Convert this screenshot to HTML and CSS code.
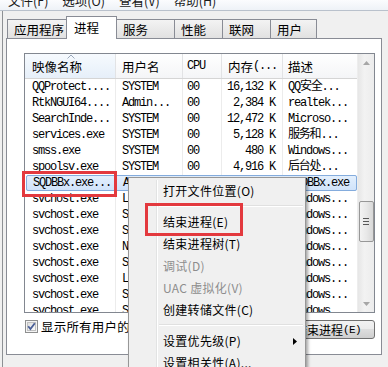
FILE: index.html
```html
<!DOCTYPE html>
<html lang="zh-CN">
<head>
<meta charset="utf-8">
<link rel="stylesheet" href="styles.css">
</head>
<body>
<div class="menubar">
  <span class="mi">文件(F)</span>
  <span class="mi">选项(O)</span>
  <span class="mi">查看(V)</span>
  <span class="mi">帮助(H)</span>
</div>
<div class="app">
  <div class="tabs">
    <div class="tab w60">应用程序</div>
    <div class="tab sel w50">进程</div>
    <div class="tab w58">服务</div>
    <div class="tab w48">性能</div>
    <div class="tab w48">联网</div>
    <div class="tab w47">用户</div>
  </div>
  <div class="panel">
    <div class="list">
      <div class="grid">
        <div class="hdr">
          <div class="hc sorted"><span class="cjk">映像名称</span>
            <svg class="sortarrow" width="8" height="5" viewBox="0 0 8 5"><polyline points="0.5,4.5 4,1 7.5,4.5" fill="none" stroke="#9aa8bb" stroke-width="1"/></svg>
          </div>
          <div class="hc"><span class="cjk">用户名</span></div>
          <div class="hc">CPU</div>
          <div class="hc"><span class="cjk">内存</span>(...</div>
          <div class="hc"><span class="cjk">描述</span></div>
        </div>
        <div class="rows">
          <div class="row"><div class="c">QQProtect....</div><div class="c">SYSTEM</div><div class="c">00</div><div class="c r">16,132 K</div><div class="c">QQ安全...</div></div>
          <div class="row"><div class="c">RtkNGUI64....</div><div class="c">Admin...</div><div class="c">00</div><div class="c r">2,384 K</div><div class="c">realtek...</div></div>
          <div class="row"><div class="c">SearchInde...</div><div class="c">SYSTEM</div><div class="c">00</div><div class="c r">12,472 K</div><div class="c">Microso...</div></div>
          <div class="row"><div class="c">services.exe</div><div class="c">SYSTEM</div><div class="c">00</div><div class="c r">5,128 K</div><div class="c">服务和...</div></div>
          <div class="row"><div class="c">smss.exe</div><div class="c">SYSTEM</div><div class="c">00</div><div class="c r">480 K</div><div class="c">Windows...</div></div>
          <div class="row"><div class="c">spoolsv.exe</div><div class="c">SYSTEM</div><div class="c">00</div><div class="c r">4,916 K</div><div class="c">后台处...</div></div>
          <div class="row selrow"><div class="c">SQDBBx.exe...</div><div class="c">Admin...</div><div class="c">00</div><div class="c r">3,056 K</div><div class="c">SQDBBx.exe</div></div>
          <div class="row"><div class="c">svchost.exe</div><div class="c">LOCAL...</div><div class="c">00</div><div class="c r">9,812 K</div><div class="c">Windows...</div></div>
          <div class="row"><div class="c">svchost.exe</div><div class="c">SYSTEM</div><div class="c">00</div><div class="c r">4,204 K</div><div class="c">Windows...</div></div>
          <div class="row"><div class="c">svchost.exe</div><div class="c">SYSTEM</div><div class="c">00</div><div class="c r">22,516 K</div><div class="c">Windows...</div></div>
          <div class="row"><div class="c">svchost.exe</div><div class="c">NETWO...</div><div class="c">00</div><div class="c r">6,332 K</div><div class="c">Windows...</div></div>
          <div class="row"><div class="c">svchost.exe</div><div class="c">SYSTEM</div><div class="c">00</div><div class="c r">17,940 K</div><div class="c">Windows...</div></div>
          <div class="row"><div class="c">svchost.exe</div><div class="c">LOCAL...</div><div class="c">00</div><div class="c r">8,120 K</div><div class="c">Windows...</div></div>
          <div class="row"><div class="c">svchost.exe</div><div class="c">SYSTEM</div><div class="c">00</div><div class="c r">2,764 K</div><div class="c">Windows...</div></div>
          <div class="row"><div class="c">svchost.exe</div><div class="c">SYSTEM</div><div class="c">00</div><div class="c r">1,908 K</div><div class="c">Windows...</div></div>
        </div>
      </div>
      <div class="vscroll">
        <div class="arrow"><svg width="7" height="4" viewBox="0 0 7 4"><polygon points="0,4 3.5,0 7,4" fill="#a6a6a6"/></svg></div>
        <div class="track">
          <div class="thumb"><span class="grip"></span><span class="grip"></span><span class="grip"></span></div>
        </div>
        <div class="arrow"><svg width="7" height="4" viewBox="0 0 7 4"><polygon points="0,0 3.5,4 7,0" fill="#a6a6a6"/></svg></div>
      </div>
    </div>
    <div class="opts">
      <label class="chk">
        <svg class="box" width="13" height="13" viewBox="0 0 13 13">
          <defs><linearGradient id="cg" x1="0" y1="0" x2="1" y2="1"><stop offset="0" stop-color="#dcdcdc"/><stop offset="1" stop-color="#ffffff"/></linearGradient></defs>
          <rect x="0.5" y="0.5" width="12" height="12" fill="#f4f4f4" stroke="#8e8f8f"/>
          <rect x="2.5" y="2.5" width="8" height="8" fill="url(#cg)" stroke="#c0c0c0"/>
          <polyline points="3.2,6.2 5.4,9 9.8,3.2" fill="none" stroke="#4a5f97" stroke-width="1.8"/>
        </svg>
        <span>显示所有用户的进程</span>
      </label>
      <div class="btn">结束进程<span class="mono">(E)</span></div>
    </div>
  </div>
</div>

<div class="ctx">
  <div class="gutter"></div>
  <div class="item">打开文件位置(O)</div>
  <div class="sep"></div>
  <div class="item">结束进程(E)</div>
  <div class="item">结束进程树(T)</div>
  <div class="item dis">调试(D)</div>
  <div class="item dis">UAC 虚拟化(V)</div>
  <div class="item">创建转储文件(C)</div>
  <div class="sep"></div>
  <div class="item sub">设置优先级(P)<svg class="subarrow" width="4" height="7" viewBox="0 0 4 7"><polygon points="0,0 4,3.5 0,7" fill="#000"/></svg></div>
  <div class="item">设置相关性(A)...</div>
</div>

<div class="mark mark1"></div>
<div class="mark mark2"></div>
</body>
</html>
```

FILE: styles.css
```css
* { box-sizing: border-box; }

body {
  margin: 0;
  width: 388px;
  height: 367px;
  overflow: hidden;
  position: relative;
  background: #f0f0f0;
  font-family: "Noto Sans CJK SC", sans-serif;
  font-size: 12px;
  color: #000;
}

.menubar {
  height: 11px;
  background: linear-gradient(#fbfcfe, #eef2f7);
  border-bottom: 1px solid #b9c1cc;
  display: flex;
  align-items: flex-start;
  padding-left: 8px;
  line-height: 2px;
  font-size: 12.5px;
  color: #1a1a1a;
}
.mi { margin-right: 14px; }

.app {
  margin-left: 2px;
  border-left: 1px solid #8d9094;
  padding-left: 3px;
  height: 356px;
}

.tabs {
  display: flex;
  align-items: flex-end;
  height: 27px;
  margin-left: 1px;
}
.tab {
  height: 19px;
  border: 1px solid #898c95;
  border-bottom: none;
  background: linear-gradient(#f3f3f3, #e1e1e1);
  padding-left: 6px;
  line-height: 19px;
  font-size: 12.5px;
  margin-right: -1px;
}
.tab.sel {
  height: 23px;
  background: #fff;
  margin-bottom: -1px;
  position: relative;
  z-index: 1;
  line-height: 22px;
  padding-left: 7px;
}
.w60 { width: 60px; }
.w50 { width: 51px; }
.w58 { width: 59px; }
.w48 { width: 49px; }
.w47 { width: 47px; }

.panel {
  width: 376px;
  height: 317px;
  border: 1px solid #898c95;
  background: #fff;
  padding: 14px 0 0 17px;
}

.list {
  width: 351px;
  height: 260px;
  border: 1px solid #828790;
  display: flex;
  overflow: hidden;
}
.grid {
  width: 332px;
  display: flex;
  flex-direction: column;
}
.hdr, .row {
  display: grid;
  grid-template-columns: 91px 67px 39px 61px 74px;
}
.hdr {
  height: 25px;
  border-bottom: 1px solid #d5d5d5;
  background: linear-gradient(#ffffff, #f4f5f7);
  font-family: "Liberation Mono", "Noto Sans CJK SC", monospace;
  font-size: 12px;
  letter-spacing: -1.2px;
}
.hc {
  border-right: 1px solid #e2e3e5;
  display: flex;
  align-items: center;
  padding-left: 6px;
  position: relative;
}
.hc:nth-child(1) { padding-left: 7px; }
.hc:nth-child(3) { padding-left: 4px; }
.hc:nth-child(4) { padding-left: 6px; }
.hc:nth-child(5) { padding-left: 5px; border-right: none; }
.hc.sorted { background: linear-gradient(#f6fafe, #e6eff9); }
.cjk {
  font-family: "Noto Sans CJK SC", sans-serif;
  font-size: 12.5px;
  letter-spacing: 0;
}
.sortarrow { position: absolute; left: 42px; top: 0px; }

.rows {
  flex: 1;
  overflow: hidden;
  font-family: "Liberation Mono", "Noto Sans CJK SC", monospace;
  font-size: 12px;
  letter-spacing: -1.2px;
}
.row {
  height: 16px;
  line-height: 16px;
  white-space: nowrap;
}
.c {
  border-right: 1px solid #ececec;
  padding-left: 6px;
  overflow: hidden;
}
.c:nth-child(1) { padding-left: 7px; }
.c:nth-child(3) { padding-left: 4px; }
.c.r { text-align: right; padding-right: 7px; padding-left: 0; }
.c:nth-child(5) { padding-left: 5px; border-right: none; }

.selrow {
  background: linear-gradient(#e4f0fd, #cfe2fa);
  outline: 1px solid #84acdd;
  outline-offset: -1px;
  border-radius: 2px;
  margin-left: 1px;
}
.selrow .c { border-right-color: transparent; }

.vscroll {
  width: 17px;
  background: linear-gradient(90deg, #e6e6e6, #f2f2f2 40%, #ececec);
  border-left: 1px solid #ededed;
  display: flex;
  flex-direction: column;
}
.arrow {
  height: 17px;
  display: flex;
  align-items: center;
  justify-content: center;
}
.track {
  flex: 1;
  padding-top: 130px;
  display: flex;
  justify-content: center;
}
.thumb {
  width: 15px;
  height: 41px;
  border: 1px solid #979797;
  border-radius: 2px;
  background: linear-gradient(90deg, #f3f3f3, #e8e8e8 50%, #d8d8d8);
  display: flex;
  flex-direction: column;
  align-items: center;
  justify-content: center;
  gap: 2px;
}
.grip {
  width: 6px;
  height: 1px;
  background: #585858;
}

.opts {
  width: 351px;
  margin-top: 7px;
  display: flex;
  justify-content: space-between;
  align-items: flex-start;
}
.chk {
  display: flex;
  align-items: center;
  margin-left: 1px;
  gap: 3px;
  height: 13px;
  font-size: 12.5px;
  letter-spacing: 0.2px;
}
.btn {
  width: 98px;
  height: 19px;
  border: 1px solid #707070;
  border-radius: 3px;
  background: linear-gradient(#f2f2f2, #ebebeb 50%, #dddddd 50%, #cfcfcf);
  display: flex;
  align-items: center;
  justify-content: center;
  font-size: 12px;
  padding-left: 4px;
}
.mono {
  font-family: "Liberation Mono", monospace;
  font-size: 11px;
  letter-spacing: -0.6px;
}

.ctx {
  position: absolute;
  left: 128px;
  top: 177px;
  width: 178px;
  height: 200px;
  background: #f0f0f0;
  border: 1px solid #979797;
  box-shadow: 2px 2px 3px rgba(0, 0, 0, 0.35);
  padding-top: 2px;
  z-index: 5;
}
.gutter {
  position: absolute;
  left: 27px;
  top: 2px;
  bottom: 0;
  width: 2px;
  border-left: 1px solid #e2e3e3;
  border-right: 1px solid #ffffff;
}
.item {
  height: 22px;
  line-height: 22px;
  padding-left: 34px;
  font-size: 12px;
  letter-spacing: 0.3px;
  position: relative;
}
.item.dis { color: #8d8d8d; }
.subarrow { position: absolute; left: 164px; top: 8px; }
.sep {
  height: 9px;
  margin-left: 30px;
  margin-right: 2px;
  position: relative;
}
.sep::before {
  content: "";
  position: absolute;
  left: 0;
  right: 0;
  top: 3px;
  height: 1px;
  background: #e0e0e0;
  border-bottom: 1px solid #fff;
  box-sizing: content-box;
}

.mark {
  position: absolute;
  border: 3px solid #e3393e;
  z-index: 10;
}
.mark1 { left: 22px; top: 171px; width: 95px; height: 26px; }
.mark2 { left: 145px; top: 203px; width: 98px; height: 33px; }
```
